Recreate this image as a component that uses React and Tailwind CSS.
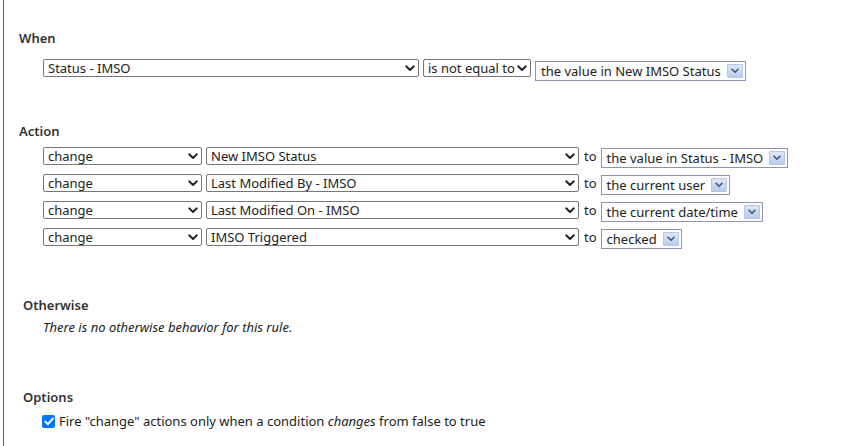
import React from "react";

const font = { fontFamily: '"Noto Sans", "Open Sans", Arial, sans-serif' };

function Chevron() {
  return (
    <svg width="10" height="7" viewBox="0 0 10 7" className="shrink-0">
      <path d="M1.2 1.3 L5 5 L8.8 1.3" fill="none" stroke="#222" strokeWidth="1.9" strokeLinecap="round" strokeLinejoin="round" />
    </svg>
  );
}

function Select({ w, children }) {
  return (
    <div
      className="h-[18px] shrink-0 flex items-center justify-between border border-[#767676] rounded-[2px] bg-white pl-[4px] pr-[3px] text-[13px] leading-none text-[#222]"
      style={{ width: w }}
    >
      <span className="whitespace-nowrap">{children}</span>
      <Chevron />
    </div>
  );
}

function ValueBox({ children }) {
  return (
    <div className="h-[20px] shrink-0 flex items-center border border-[#8d93b3] bg-white pl-[5px] pr-[2px] gap-[6px] text-[13px] leading-none text-[#222]">
      <span className="whitespace-nowrap">{children}</span>
      <div className="w-[16px] h-[14px] flex items-center justify-center border border-[#b5c6e6] bg-gradient-to-b from-[#dfe8fa] to-[#b9cbef] rounded-[1px]">
        <svg width="8" height="6" viewBox="0 0 8 6">
          <path d="M1 1.3 L4 4.3 L7 1.3" fill="none" stroke="#3d5479" strokeWidth="1.6" strokeLinecap="round" strokeLinejoin="round" />
        </svg>
      </div>
    </div>
  );
}

function ActionRow({ field, value }) {
  return (
    <div className="h-[27px] flex items-start">
      <Select w="159px">change</Select>
      <div className="ml-[4px]">
        <Select w="373px">{field}</Select>
      </div>
      <span className="ml-[5px] mt-[1px] text-[13px] leading-[16px] text-[#222]">to</span>
      <div className="ml-[4px] mt-[1px]">
        <ValueBox>{value}</ValueBox>
      </div>
    </div>
  );
}

export default function App() {
  return (
    <div className="w-[856px] h-[446px] bg-white overflow-hidden" style={font}>
      <div className="ml-[3px] h-full border-l border-[#4a6283] relative">
        <div className="pt-[30px]">
          <div className="pl-[15px] text-[13px] leading-[16px] font-semibold text-[#333]">When</div>
          <div className="mt-[13px] pl-[39px] flex items-start">
            <Select w="376px">Status - IMSO</Select>
            <div className="ml-[4px]">
              <Select w="108px">is not equal to</Select>
            </div>
            <div className="ml-[4px] mt-[2px]">
              <ValueBox>the value in New IMSO Status</ValueBox>
            </div>
          </div>

          <div className="mt-[42px] pl-[15px] text-[13px] leading-[16px] font-semibold text-[#333]">Action</div>
          <div className="mt-[8px] pl-[39px] flex flex-col">
            <ActionRow field="New IMSO Status" value="the value in Status - IMSO" />
            <ActionRow field="Last Modified By - IMSO" value="the current user" />
            <ActionRow field="Last Modified On - IMSO" value="the current date/time" />
            <ActionRow field="IMSO Triggered" value="checked" />
          </div>

          <div className="mt-[42px] pl-[19px] text-[13px] leading-[16px] font-semibold text-[#333]">Otherwise</div>
          <div className="mt-[6px] pl-[39px] text-[13px] leading-[16px] italic text-[#222]">
            There is no otherwise behavior for this rule.
          </div>

          <div className="mt-[54px] pl-[19px] text-[13px] leading-[16px] font-semibold text-[#333]">Options</div>
          <div className="mt-[8px] pl-[38px] flex items-center text-[13px] leading-[16px] text-[#222]">
            <div className="w-[13px] h-[13px] rounded-[2px] bg-[#0075ff] flex items-center justify-center shrink-0">
              <svg width="10" height="9" viewBox="0 0 10 9">
                <path d="M1.3 4.6 L3.9 7.2 L8.8 1.6" fill="none" stroke="white" strokeWidth="2" strokeLinecap="round" strokeLinejoin="round" />
              </svg>
            </div>
            <span className="ml-[4px]">
              Fire "change" actions only when a condition <i>changes</i> from false to true
            </span>
          </div>
        </div>
      </div>
    </div>
  );
}
